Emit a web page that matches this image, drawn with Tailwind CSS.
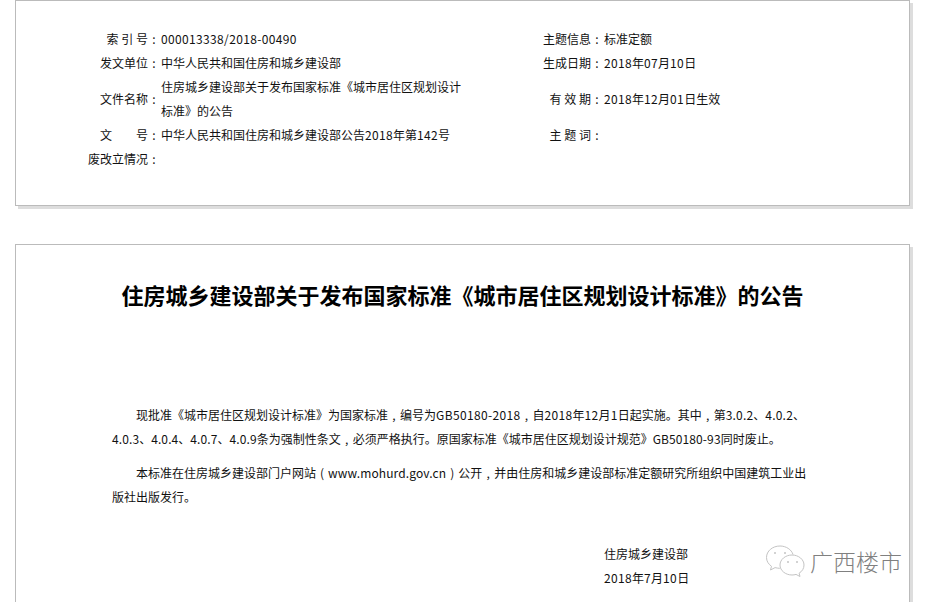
<!DOCTYPE html>
<html lang="zh-CN">
<head>
<meta charset="utf-8">
<script src="https://cdn.jsdelivr.net/npm/@tailwindcss/browser@4"></script>
</head>
<body class="bg-white">
<div class="relative h-[602px] w-[931px] overflow-hidden bg-white font-['Noto_Sans_CJK_SC','Noto_Sans',sans-serif] text-[12px] leading-6 text-[#111]">
  <div class="ml-[15px] flex w-[895px] flex-col gap-[38px]">
    <section class="h-[206px] border border-[#bbb] bg-white pt-[26px] shadow-[3px_3px_0_#ddd]">
      <div class="grid grid-cols-[144px_383px_60px_1fr] items-center">
        <div class="text-right">索 引 号<span class="inline-block w-3 text-center">:</span></div><div class="pl-px tracking-[0.35px]">000013338/2018-00490</div>
        <div class="text-right">主题信息<span class="inline-block w-3 text-center">:</span></div><div class="pl-px">标准定额</div>
        <div class="text-right">发文单位<span class="inline-block w-3 text-center">:</span></div><div class="pl-px">中华人民共和国住房和城乡建设部</div>
        <div class="text-right">生成日期<span class="inline-block w-3 text-center">:</span></div><div class="pl-px"><span class="tracking-[0.35px]">2018</span>年<span class="tracking-[0.35px]">07</span>月<span class="tracking-[0.35px]">10</span>日</div>
        <div class="text-right">文件名称<span class="inline-block w-3 text-center">:</span></div><div class="w-[301px] pl-px">住房城乡建设部关于发布国家标准《城市居住区规划设计标准》的公告</div>
        <div class="text-right">有 效 期<span class="inline-block w-3 text-center">:</span></div><div class="pl-px"><span class="tracking-[0.35px]">2018</span>年<span class="tracking-[0.35px]">12</span>月<span class="tracking-[0.35px]">01</span>日生效</div>
        <div class="text-right">文　　号<span class="inline-block w-3 text-center">:</span></div><div class="pl-px">中华人民共和国住房和城乡建设部公告<span class="tracking-[0.35px]">2018</span>年第<span class="tracking-[0.35px]">142</span>号</div>
        <div class="text-right">主 题 词<span class="inline-block w-3 text-center">:</span></div><div></div>
        <div class="text-right">废改立情况<span class="inline-block w-3 text-center">:</span></div><div></div>
        <div></div><div></div>
      </div>
    </section>
    <section class="h-[400px] border border-[#bbb] bg-white pt-[34px] shadow-[3px_3px_0_#ddd]">
      <h1 class="text-center text-[22px] leading-[30px] font-bold text-black">住房城乡建设部关于发布国家标准《城市居住区规划设计标准》的公告</h1>
      <div class="ml-[96px] mt-[94px] w-[698px]">
        <p class="indent-6">现批准《城市居住区规划设计标准》为国家标准<span class="inline-block w-3 indent-0 text-center">,</span>编号为<span class="tracking-[0.35px]">GB50180-2018</span><span class="inline-block w-3 indent-0 text-center">,</span>自<span class="tracking-[0.35px]">2018</span>年<span class="tracking-[0.35px]">12</span>月<span class="tracking-[0.35px]">1</span>日起实施。其中<span class="inline-block w-3 indent-0 text-center">,</span>第<span class="tracking-[0.2px]">3.0.2</span>、<span class="tracking-[0.2px]">4.0.2</span>、<span class="tracking-[0.1px]">4.0.3</span>、<span class="tracking-[0.1px]">4.0.4</span>、<span class="tracking-[0.1px]">4.0.7</span>、<span class="tracking-[0.1px]">4.0.9</span>条为强制性条文<span class="inline-block w-3 indent-0 text-center">,</span>必须严格执行。原国家标准《城市居住区规划设计规范》<span class="tracking-[0.1px]">GB50180-93</span>同时废止。</p>
        <p class="mt-[10px] indent-6">本标准在住房城乡建设部门户网站<span class="inline-block w-3 indent-0 text-center">(</span><span class="tracking-[0.12px]">www.mohurd.gov.cn</span><span class="inline-block w-3 indent-0 text-center">)</span>公开<span class="inline-block w-3 indent-0 text-center">,</span>并由住房和城乡建设部标准定额研究所组织中国建筑工业出版社出版发行。</p>
      </div>
      <div class="ml-[588px] mt-[33px]">
        <p>住房城乡建设部</p>
        <p><span class="tracking-[0.35px]">2018</span>年<span class="tracking-[0.35px]">7</span>月<span class="tracking-[0.35px]">10</span>日</p>
      </div>
    </section>
  </div>
  <div class="absolute left-[765px] top-[544px] flex items-start gap-[5px]">
    <svg class="h-[36px] w-[40px]" viewBox="0 0 40 36" fill="none" stroke="#c4c4c4" stroke-width="1">
      <path d="M15 2C7.500 2 1.500 7 1.500 13.500c0 3.800 2 6.600 5 8.800L5.500 26l4.600-2.400c1.500.4 3 .7 4.700.7"/>
      <path d="M15 2c6 0 11.500 3.500 13 8.500"/>
      <path d="M27 11c-6.500 0-12 4.400-12 10s5.500 10 12 10c1.400 0 2.700-.2 4-.6l4 2.100-.9-3.300C37.200 27.300 39 24.500 39 21c0-5.600-5.500-10-12-10z"/>
      <circle cx="10" cy="9" r="1" fill="#c4c4c4" stroke="none"/><circle cx="20" cy="9" r="1" fill="#c4c4c4" stroke="none"/>
      <circle cx="23" cy="18" r="1" fill="#c4c4c4" stroke="none"/><circle cx="32" cy="18" r="1" fill="#c4c4c4" stroke="none"/>
    </svg>
    <span class="mt-[2px] text-[23px] leading-[30px] font-light text-[#808080]">广西楼市</span>
  </div>
</div>
</body>
</html>
